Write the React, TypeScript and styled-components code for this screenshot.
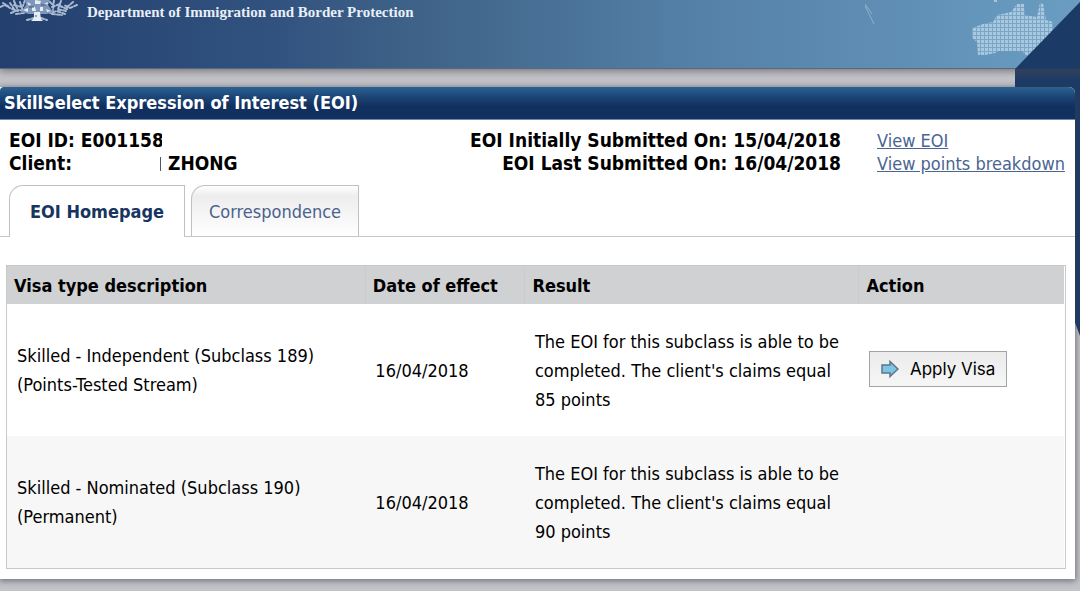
import React from 'react';
import styled, { createGlobalStyle } from 'styled-components';

const GlobalStyle = createGlobalStyle`
  *, *::before, *::after { box-sizing: border-box; }
  body {
    margin: 0;
    background: #c3c4c9;
    color: #000;
    font-family: Tahoma, "DejaVu Sans Condensed", sans-serif;
    font-size: 18px;
    line-height: 23px;
  }
`;

const Page = styled.div`
  position: relative;
  padding-bottom: 11px;
  overflow: hidden;
`;

const Banner = styled.header`
  height: 69px;
  padding: 0 0 0 87px;
  background: linear-gradient(90deg, #233f6d 0%, #31527f 25%, #406489 40%, #5581a8 65%, #5e8cb2 80%, #6a9dc1 100%);
  border-bottom: 1px solid #54688a;
  box-shadow: 0 1px 8px 1px rgba(70, 60, 60, 0.6);
`;

const Department = styled.p`
  margin: 0;
  color: #e9eff8;
  font: bold 15px/25px "Liberation Serif", "Times New Roman", serif;
`;

const Crest = styled.svg`
  position: absolute;
  top: 0;
  left: 0;
`;

const BannerArt = styled.svg`
  position: absolute;
  top: 0;
  right: 0;
`;

const Panel = styled.main`
  position: relative;
  margin: 18px 5px 0 0;
  background: #fff;
  border-radius: 0 6px 0 0;
  box-shadow: 0 1px 6px 1px rgba(60, 60, 70, 0.6);
  padding-bottom: 10px;
`;

const Title = styled.h1`
  margin: 0;
  padding: 0 4px;
  color: #fff;
  font-size: 18px;
  line-height: 32px;
  background: linear-gradient(#2b6293, #1c4678 30%, #12305f 60%, #12305f);
  border-bottom: 1px solid #6f88ac;
  border-radius: 4px 6px 0 0;
`;

const Summary = styled.section`
  display: flex;
  padding: 9px 9px 0;
`;

const Client = styled.div`
  flex: 1;
  font-size: 19px;
  font-weight: bold;
`;

const Line = styled.div`
  display: flex;
`;

const ClippedId = styled.span`
  width: 153px;
  overflow: hidden;
  white-space: nowrap;
`;

const ClientLabel = styled.span`
  width: 151px;
`;

const NameEdge = styled.span`
  width: 1px;
  height: 14px;
  margin: 5px 7px 0 0;
  background: #4a5578;
`;

const Dates = styled.div`
  font-size: 19px;
  font-weight: bold;
  text-align: right;
`;

const Links = styled.nav`
  display: flex;
  flex-direction: column;
  align-items: flex-start;
  width: 189px;
  margin-left: 36px;
`;

const Link = styled.a`
  color: #4a6591;
  white-space: nowrap;
`;

const Tabs = styled.nav`
  display: flex;
  gap: 6px;
  margin-top: 10px;
  padding-left: 9px;
  border-bottom: 1px solid #c6c6c8;
`;

const Tab = styled.a<{ $active?: boolean }>`
  min-width: ${p => (p.$active ? 176 : 168)}px;
  height: ${p => (p.$active ? 52 : 51)}px;
  margin-bottom: ${p => (p.$active ? -1 : 0)}px;
  padding: 0 17px;
  border: 1px solid #c0c1c4;
  border-bottom: 0;
  border-radius: 14px 0 0 0;
  background: ${p => (p.$active ? '#fff' : 'linear-gradient(#fff, #ededee 20%, #fff)')};
  color: ${p => (p.$active ? '#17355f' : '#4a628c')};
  font-weight: ${p => (p.$active ? 'bold' : 'normal')};
  line-height: 51px;
  text-align: center;
  text-decoration: none;
`;

const Results = styled.div`
  margin: 28px 9px 0 6px;
  padding-right: 1px;
  border: 1px solid #c8c9cb;
`;

const Table = styled.table`
  width: 100%;
  table-layout: fixed;
  border-collapse: collapse;
`;

const Column = styled.col<{ $share: number }>`
  width: ${p => p.$share / 10}%;
`;

const HeadCell = styled.th`
  height: 38px;
  padding: 0 7px;
  background: #d0d1d3;
  text-align: left;

  & + & { border-left: 1px solid #cbccce; }
`;

const Row = styled.tr`
  &:nth-child(even) { background: #f7f7f7; }
`;

const Cell = styled.td`
  height: 132px;
  padding: 0 10px;
  line-height: 29px;
`;

const ApplyButton = styled.button`
  display: flex;
  align-items: center;
  gap: 11px;
  height: 36px;
  margin-bottom: 2px;
  padding: 0 11px;
  border: 1px solid #a2a3a6;
  border-radius: 0;
  background: linear-gradient(#ebebec, #f6f6f7);
  color: #000;
  font: 17px/34px Inter, sans-serif;
  white-space: nowrap;
`;

const visas = [
  { name: 'Skilled - Independent (Subclass 189)', stream: '(Points-Tested Stream)', date: '16/04/2018', points: 85, canApply: true },
  { name: 'Skilled - Nominated (Subclass 190)', stream: '(Permanent)', date: '16/04/2018', points: 90, canApply: false },
];

const AUSTRALIA =
  '107,28 118,24 128,22 132,15 146,12 152,4 159,4 160,15 172,17 175,3 178,3 181,20 188,22 188,32 162,56 157,51 133,51 130,53 120,55 113,55 112,42 107,38';

export default function App() {
  return (
    <>
      <GlobalStyle />
      <Page>
        <Banner>
          <Department>Department of Immigration and Border Protection</Department>
        </Banner>
        <Crest width="80" height="24" viewBox="0 0 80 24" aria-hidden="true">
          <g fill="none" stroke="#a9bad2" strokeWidth="2" strokeLinecap="round" strokeDasharray="3 2">
            <path d="M0 7l5-2 5 3M3 3l5 3M10 3l4 6M14 1l3 7M11 13l7-3 7 1M12 9l6 2M77 5l-7 3-6-3M73 2l-6 5M67 9l-7-3M65 14l-8-3-7 2M61 1l-3 8M66 11l-9-2" />
            <path d="M20 2l3 9M25 0l-2 6M54 0l-1 10M50 2l4 4M27 20l7-2M41 18l6 2M14 5l8 2M52 7l8-3M16 14l8-1M52 14l10 1" />
          </g>
          <path d="M25 0h25l-2 5 5 7-6 2H29l-8-2 5-7z" fill="#7f97ba" />
          <path d="M27 2l4 2-2 2zM35 0l6 1-1 3h-5zM44 4l4-2-1 4zM23 10l5-2v4zM32 7h3l1 4h-4zM40 7h3v4h-3zM46 9l5 2-4 1zM34 12h6l1 7 2 2H31l3-3z" fill="#e6edf6" />
          <path d="M29 7h5M41 5h6M36 15v2" stroke="#3d5987" strokeWidth="1" fill="none" />
        </Crest>
        <BannerArt width="215" height="338" viewBox="0 0 215 338" aria-hidden="true">
          <defs>
            <pattern id="dots" width="4" height="4" patternUnits="userSpaceOnUse">
              <rect width="4" height="4" fill="#78a7c8" />
              <rect width="3" height="3" fill="#a9c8df" />
            </pattern>
            <linearGradient id="fold" x1="0" y1="0" x2="0" y2="1">
              <stop offset="0" stopColor="#33405a" />
              <stop offset="1" stopColor="#1b3b66" />
            </linearGradient>
          </defs>
          <polygon points={AUSTRALIA} fill="url(#dots)" />
          <rect x="129" y="0" width="3" height="2" fill="#a5c5dc" />
          <path d="M-3 0l12 24M0 4l7 10" stroke="#8fb2cf" strokeWidth="1" fill="none" />
          <path d="M215 2L150 69V120H209V320L215 336z" fill="#1b3b66" />
          <rect x="150" y="69" width="65" height="12" fill="url(#fold)" />
        </BannerArt>
        <Panel>
          <Title>SkillSelect Expression of Interest (EOI)</Title>
          <Summary>
            <Client>
              <Line><ClippedId>EOI ID: E001158</ClippedId></Line>
              <Line>
                <ClientLabel>Client:</ClientLabel>
                <NameEdge />
                <span>ZHONG</span>
              </Line>
            </Client>
            <Dates>
              <div>EOI Initially Submitted On: 15/04/2018</div>
              <div>EOI Last Submitted On: 16/04/2018</div>
            </Dates>
            <Links aria-label="EOI details">
              <Link href="#eoi">View EOI</Link>
              <Link href="#points">View points breakdown</Link>
            </Links>
          </Summary>
          <Tabs aria-label="EOI sections">
            <Tab href="#home" $active aria-current="page">EOI Homepage</Tab>
            <Tab href="#correspondence">Correspondence</Tab>
          </Tabs>
          <Results>
            <Table>
              <colgroup>
                <Column $share={339} />
                <Column $share={151} />
                <Column $share={316} />
                <Column $share={194} />
              </colgroup>
              <thead>
                <tr>
                  <HeadCell scope="col">Visa type description</HeadCell>
                  <HeadCell scope="col">Date of effect</HeadCell>
                  <HeadCell scope="col">Result</HeadCell>
                  <HeadCell scope="col">Action</HeadCell>
                </tr>
              </thead>
              <tbody>
                {visas.map(visa => (
                  <Row key={visa.name}>
                    <Cell>{visa.name}<br />{visa.stream}</Cell>
                    <Cell>{visa.date}</Cell>
                    <Cell>The EOI for this subclass is able to be completed. The client's claims equal {visa.points} points</Cell>
                    <Cell>
                      {visa.canApply && (
                        <ApplyButton type="button">
                          <svg width="18" height="18" viewBox="0 0 18 18" aria-hidden="true">
                            <path d="M1 5h8V1.500l8 7.500-8 7.500V13H1z" fill="#7ec4e6" stroke="#5f7484" strokeWidth="1.500" />
                          </svg>
                          Apply Visa
                        </ApplyButton>
                      )}
                    </Cell>
                  </Row>
                ))}
              </tbody>
            </Table>
          </Results>
        </Panel>
      </Page>
    </>
  );
}
